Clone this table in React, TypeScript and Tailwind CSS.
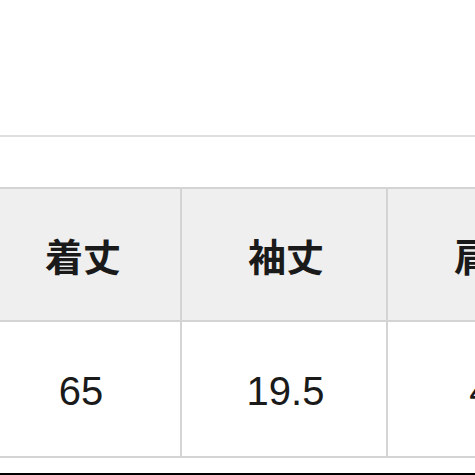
import React from "react";

const cjk = { fontFamily: '"Noto Sans CJK JP", "Noto Sans", sans-serif' };
const num = { fontFamily: '"Liberation Sans", Arial, sans-serif' };

export default function App() {
  const headers = ["着丈", "袖丈", "肩幅"];
  const values = ["65", "19.5", "45"];
  const widths = ["w-[203px]", "w-[206px]", "w-[206px]"];
  return (
    <div className="w-[475px] h-[475px] bg-white overflow-hidden flex flex-col">
      <div className="h-[135px] shrink-0" />
      <div className="h-[2px] bg-[#dedede] shrink-0" />
      <div className="h-[50px] shrink-0" />
      <div className="ml-[-21px] border-t-2 border-[#d4d4d4] shrink-0 flex flex-col">
        <div className="flex">
          {headers.map((h, i) => (
            <div
              key={h}
              className={`${widths[i]} shrink-0 h-[133px] bg-[#efefef] border-r-2 border-b-2 border-[#d4d4d4] flex items-center justify-center text-[38px] font-bold text-[#1a1a1a] leading-none`}
              style={cjk}
            >
              <span className={i === 0 ? "pl-[7px]" : "pl-[4px]"}>{h}</span>
            </div>
          ))}
        </div>
        <div className="flex">
          {values.map((v, i) => (
            <div
              key={v}
              className={`${widths[i]} shrink-0 h-[136px] bg-white border-r-2 border-b-2 border-[#d4d4d4] flex items-center justify-center text-[40px] text-[#1a1a1a] leading-none`}
              style={num}
            >
              <span className="pl-[3px] pt-[3px]">{v}</span>
            </div>
          ))}
        </div>
      </div>
      <div className="h-[15px] shrink-0" />
      <div className="h-[2px] bg-black shrink-0" />
    </div>
  );
}
